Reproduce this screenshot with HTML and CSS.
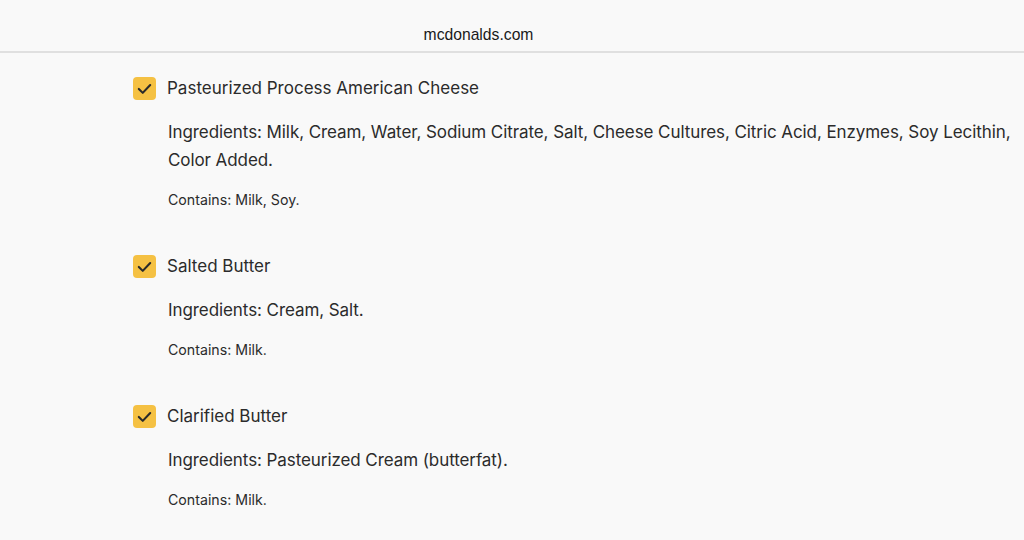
FILE: index.html
```html
<!DOCTYPE html>
<html lang="en">
<head>
    <meta charset="UTF-8">
    <title>mcdonalds.com</title>
    <link rel="stylesheet" href="styles.css">
</head>
<body>
<div class="address-bar">mcdonalds.com</div>

<div class="ingredient-list">
    <!-- cheese -->
    <div class="ingredient">
        <div class="ingredient-head">
            <span class="check"><svg viewBox="0 0 24 24" width="21" height="21"><path d="M5.5 12.5l4.5 4.5L18.5 8" fill="none" stroke="#2a2a2a" stroke-width="2.4" stroke-linecap="round" stroke-linejoin="round"/></svg></span>
            <span class="ingredient-name">Pasteurized Process American Cheese</span>
        </div>
        <p class="ingredients">Ingredients: Milk, Cream, Water, Sodium Citrate, Salt, Cheese Cultures, Citric Acid, Enzymes, Soy Lecithin, Color Added.</p>
        <p class="contains">Contains: Milk, Soy.</p>
    </div>

    <!-- salted butter -->
    <div class="ingredient">
        <div class="ingredient-head">
            <span class="check"><svg viewBox="0 0 24 24" width="21" height="21"><path d="M5.5 12.5l4.5 4.5L18.5 8" fill="none" stroke="#2a2a2a" stroke-width="2.4" stroke-linecap="round" stroke-linejoin="round"/></svg></span>
            <span class="ingredient-name">Salted Butter</span>
        </div>
        <p class="ingredients">Ingredients: Cream, Salt.</p>
        <p class="contains">Contains: Milk.</p>
    </div>

    <!-- clarified butter -->
    <div class="ingredient">
        <div class="ingredient-head">
            <span class="check"><svg viewBox="0 0 24 24" width="21" height="21"><path d="M5.5 12.5l4.5 4.5L18.5 8" fill="none" stroke="#2a2a2a" stroke-width="2.4" stroke-linecap="round" stroke-linejoin="round"/></svg></span>
            <span class="ingredient-name">Clarified Butter</span>
        </div>
        <p class="ingredients">Ingredients: Pasteurized Cream (butterfat).</p>
        <p class="contains">Contains: Milk.</p>
    </div>
</div>
</body>
</html>
```

FILE: styles.css
```css
body {
    margin: 0;
    background-color: #f9f9f9;
    font-family: Inter, "Liberation Sans", sans-serif;
    color: #2b2b2b;
    overflow: hidden;
}
.address-bar {
    height: 53px;
    box-sizing: border-box;
    padding: 26px 67px 0 0;
    text-align: center;
    font-family: "Liberation Sans", Arial, sans-serif;
    font-size: 15.7px;
    line-height: 18px;
    color: #1a1a1a;
    border-bottom: 2px solid #e0e0e0;
}
.ingredient-list {
    padding: 23px 0 0 133px;
}
.ingredient {
    margin-bottom: 44px;
}
.ingredient-head {
    display: flex;
    align-items: center;
    gap: 11px;
    height: 24px;
}
.check {
    width: 23px;
    height: 23px;
    border-radius: 4px;
    background-color: #f5c143;
    display: flex;
    align-items: center;
    justify-content: center;
    flex-shrink: 0;
}
.ingredient-name {
    font-size: 17px;
    line-height: 24px;
}
.ingredients {
    margin: 18px 0 0 35px;
    font-size: 17px;
    line-height: 28px;
    letter-spacing: -0.08px;
}
.contains {
    margin: 16px 0 0 35px;
    font-size: 14.2px;
    line-height: 20px;
}
```
